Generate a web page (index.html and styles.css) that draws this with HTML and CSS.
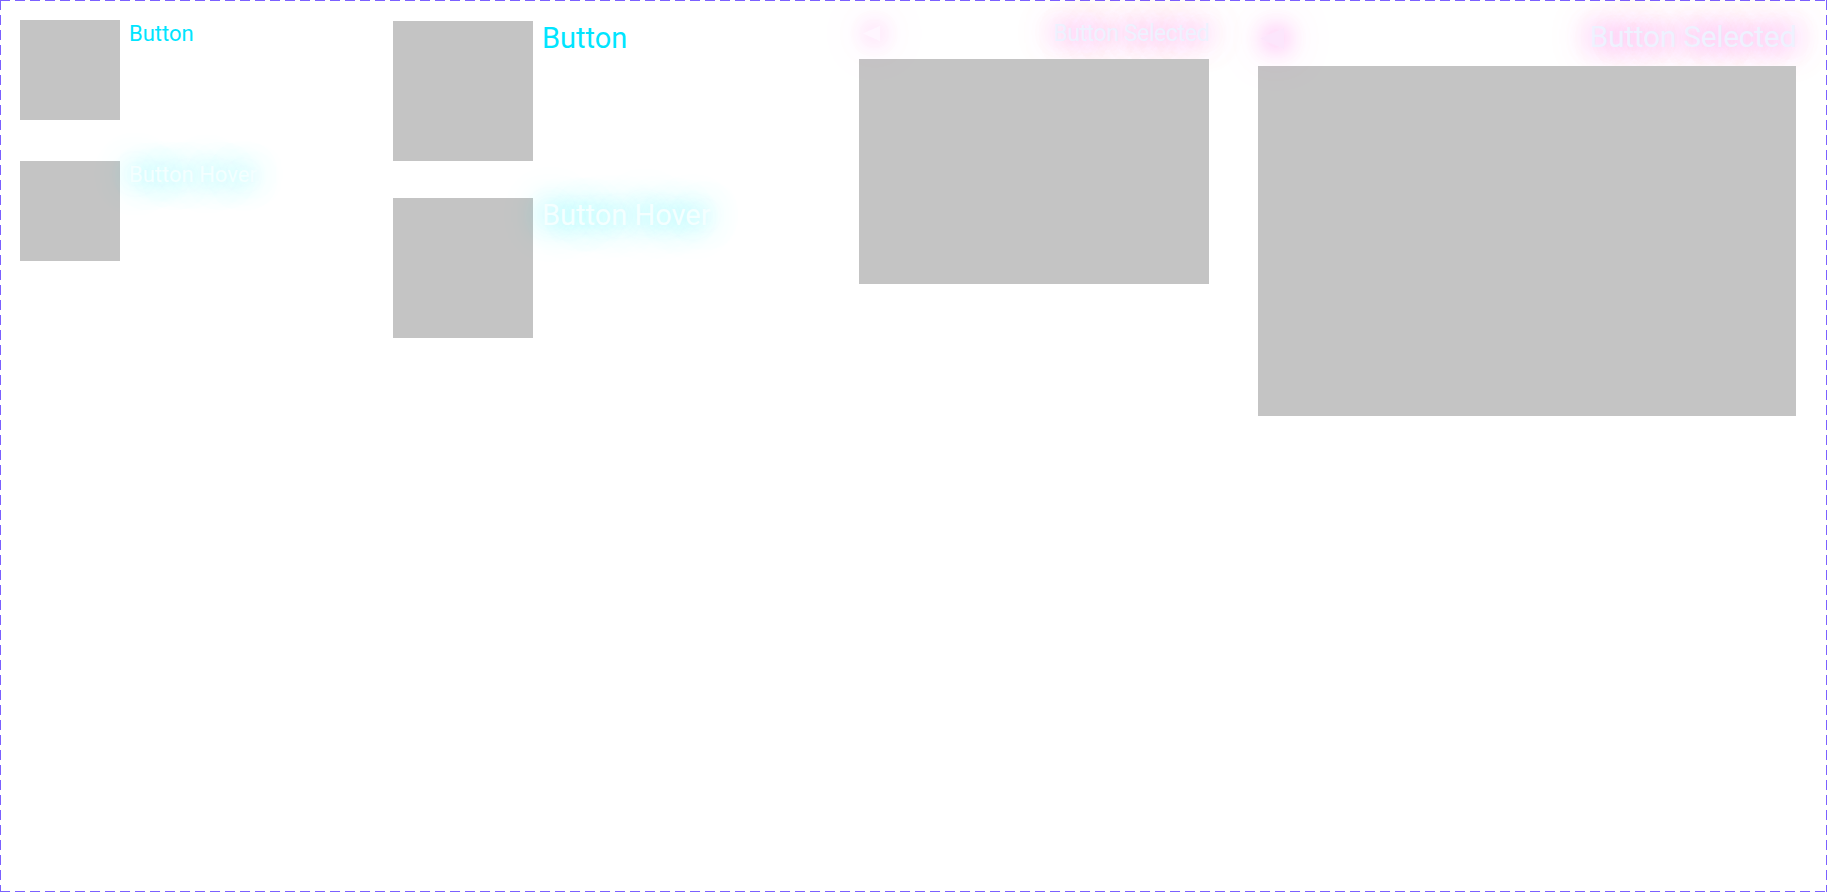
FILE: index.html
```html
<!DOCTYPE html>
<html lang="en">
<head>
<meta charset="utf-8">
<title>Buttons</title>
<link rel="stylesheet" href="styles.css">
</head>
<body>
<div class="frame">
  <div class="col col-a">
    <div class="item">
      <div class="thumb"></div>
      <span class="label">Button</span>
    </div>
    <div class="item item-next">
      <div class="thumb"></div>
      <span class="label hover">Button Hover</span>
    </div>
  </div>
  <div class="col col-b">
    <div class="item">
      <div class="thumb"></div>
      <span class="label">Button</span>
    </div>
    <div class="item item-next">
      <div class="thumb"></div>
      <span class="label hover">Button Hover</span>
    </div>
  </div>
  <div class="col col-c">
    <div class="head">
      <svg class="arrow" viewBox="0 0 24 21" aria-hidden="true"><polygon points="0,10.5 24,0 24,21"/></svg>
      <span class="sel">Button Selected</span>
    </div>
    <div class="media"></div>
  </div>
  <div class="col col-d">
    <div class="head">
      <svg class="arrow" viewBox="0 0 24 21" aria-hidden="true"><polygon points="0,10.5 24,0 24,21"/></svg>
      <span class="sel">Button Selected</span>
    </div>
    <div class="media"></div>
  </div>
</div>
</body>
</html>
```

FILE: styles.css
```css
html, body {
  margin: 0;
  padding: 0;
  background: #ffffff;
}

body {
  font-family: Roboto, "Noto Sans", sans-serif;
}

.frame {
  box-sizing: border-box;
  width: 1827px;
  height: 892px;
  display: flex;
  align-items: flex-start;
  background:
    repeating-linear-gradient(90deg, #7b61ff 0 10px, transparent 10px 15px) left top / 100% 1px no-repeat,
    repeating-linear-gradient(90deg, #7b61ff 0 10px, transparent 10px 15px) left bottom / 100% 1px no-repeat,
    repeating-linear-gradient(180deg, #7b61ff 0 10px, transparent 10px 15px) left top / 1px 100% no-repeat,
    repeating-linear-gradient(180deg, #7b61ff 0 10px, transparent 10px 15px) right top / 1px 100% no-repeat,
    #ffffff;
}

.col {
  display: flex;
  flex-direction: column;
  flex: none;
}

.col-a {
  margin-left: 20px;
  margin-top: 20px;
  width: 373px;
}

.col-b {
  margin-top: 21px;
  width: 466px;
}

.col-c {
  margin-top: 20px;
  width: 350px;
}

.col-d {
  margin-left: 49px;
  margin-top: 19px;
  width: 538px;
}

.item {
  display: flex;
  align-items: flex-start;
  gap: 9px;
}

.col-a .item-next {
  margin-top: 41px;
}

.col-b .item-next {
  margin-top: 37px;
}

.thumb {
  flex: none;
  background: #c4c4c4;
}

.col-a .thumb {
  width: 100px;
  height: 100px;
}

.col-b .thumb {
  width: 140px;
  height: 140px;
}

.label {
  color: #00e5ff;
  line-height: normal;
  white-space: nowrap;
}

.col-a .label {
  font-size: 22px;
  padding-top: 1px;
}

.col-b .label {
  font-size: 29px;
}

.label.hover {
  color: #f4ffff;
  text-shadow: 0 0 28px rgba(0, 240, 255, 0.75), 0 0 46px rgba(0, 240, 255, 0.4);
}

.head {
  display: flex;
  align-items: center;
  justify-content: space-between;
}

.col-c .head {
  height: 28px;
  margin-bottom: 11px;
}

.col-d .head {
  height: 36px;
  margin-bottom: 11px;
}

.sel {
  color: #eef2ff;
  white-space: nowrap;
  text-shadow: 0 0 28px rgba(255, 0, 220, 0.55), 0 0 46px rgba(255, 0, 220, 0.38);
}

.col-c .sel {
  font-size: 23px;
  line-height: 28px;
  letter-spacing: -0.4px;
}

.col-d .sel {
  font-size: 30px;
  line-height: 36px;
  letter-spacing: -0.3px;
}

.arrow {
  display: block;
  fill: #fce6fc;
  filter: drop-shadow(0 0 12px rgba(255, 0, 220, 0.45)) drop-shadow(0 0 22px rgba(255, 0, 220, 0.3));
}

.col-c .arrow {
  width: 17px;
  height: 15px;
  margin-left: 4px;
  margin-top: -2px;
  fill: #fff6ff;
}

.col-d .arrow {
  width: 24px;
  height: 21px;
  margin-left: 2px;
  margin-top: 3px;
}

.media {
  background: #c4c4c4;
}

.col-c .media {
  height: 225px;
}

.col-d .media {
  height: 350px;
}
```
